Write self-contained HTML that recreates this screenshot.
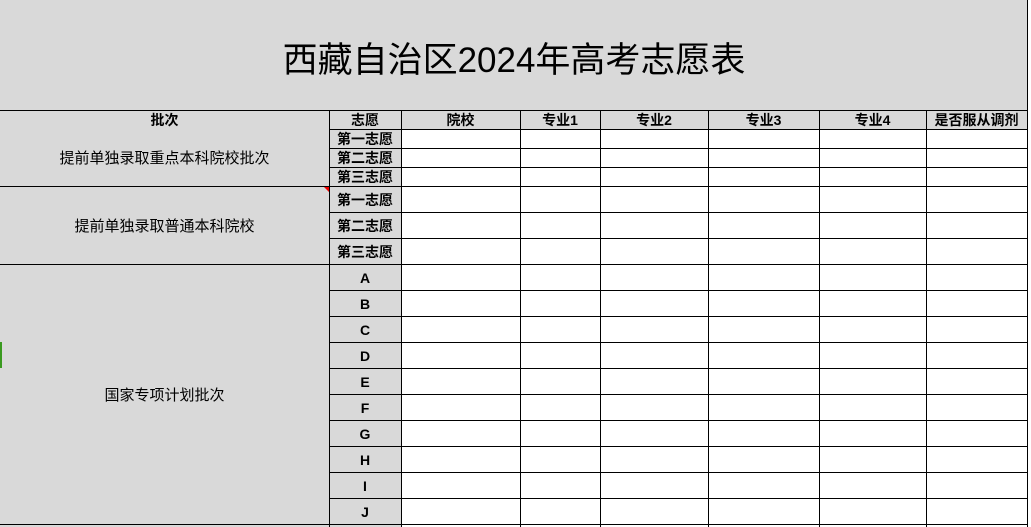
<!DOCTYPE html>
<html><head><meta charset="utf-8"><style>
*{margin:0;padding:0;box-sizing:border-box}
body{width:1031px;height:527px;overflow:hidden;background:#fff;position:relative;font-family:"Liberation Sans","Noto Sans CJK SC",sans-serif;color:#000}
.a{position:absolute}
.g{background:#d9d9d9}
.w{background:#fff}
.h{position:absolute;height:1px;background:#000}
.v{position:absolute;width:1px;background:#000}
.t{position:absolute;display:flex;align-items:center;justify-content:center;white-space:nowrap}
.b{font-weight:bold;font-size:14px}
.c{font-weight:bold;font-size:14px}
.n{font-size:15px}
</style></head><body>
<div class="a g" style="left:0;top:0;width:1028px;height:527px"></div>
<div class="a w" style="left:401px;top:129px;width:626px;height:398px"></div>
<div class="t" style="left:0;top:2px;width:1028px;height:110px;font-size:35px">西藏自治区2024年高考志愿表</div>

<div class="h" style="left:0;top:110px;width:1028px"></div>
<div class="h" style="left:329px;top:129px;width:699px"></div>
<div class="h" style="left:329px;top:148px;width:699px"></div>
<div class="h" style="left:329px;top:167px;width:699px"></div>
<div class="h" style="left:0;top:186px;width:1028px"></div>
<div class="h" style="left:329px;top:212px;width:699px"></div>
<div class="h" style="left:329px;top:238px;width:699px"></div>
<div class="h" style="left:0;top:264px;width:1028px"></div>
<div class="h" style="left:329px;top:290px;width:699px"></div>
<div class="h" style="left:329px;top:316px;width:699px"></div>
<div class="h" style="left:329px;top:342px;width:699px"></div>
<div class="h" style="left:329px;top:368px;width:699px"></div>
<div class="h" style="left:329px;top:394px;width:699px"></div>
<div class="h" style="left:329px;top:420px;width:699px"></div>
<div class="h" style="left:329px;top:446px;width:699px"></div>
<div class="h" style="left:329px;top:472px;width:699px"></div>
<div class="h" style="left:329px;top:498px;width:699px"></div>
<div class="h" style="left:0;top:524px;width:1028px"></div>
<div class="v" style="left:329px;top:110px;height:417px"></div>
<div class="v" style="left:401px;top:110px;height:417px"></div>
<div class="v" style="left:520px;top:110px;height:417px"></div>
<div class="v" style="left:600px;top:110px;height:417px"></div>
<div class="v" style="left:708px;top:110px;height:417px"></div>
<div class="v" style="left:819px;top:110px;height:417px"></div>
<div class="v" style="left:926px;top:110px;height:417px"></div>
<div class="v" style="left:1027px;top:0;height:527px"></div>
<div class="a" style="left:0;top:342px;width:2px;height:26px;background:#3a9a20"></div>
<div class="a" style="left:324px;top:187px;width:0;height:0;border-top:5px solid #e00;border-left:5px solid transparent"></div>

<div class="t b" style="left:0;top:110px;width:329px;height:20px">批次</div>
<div class="t b" style="left:329px;top:110px;width:72px;height:20px">志愿</div>
<div class="t b" style="left:401px;top:110px;width:119px;height:20px">院校</div>
<div class="t b" style="left:520px;top:110px;width:80px;height:20px">专业1</div>
<div class="t b" style="left:600px;top:110px;width:108px;height:20px">专业2</div>
<div class="t b" style="left:708px;top:110px;width:111px;height:20px">专业3</div>
<div class="t b" style="left:819px;top:110px;width:107px;height:20px">专业4</div>
<div class="t b" style="left:926px;top:110px;width:101px;height:20px">是否服从调剂</div>

<div class="t n" style="left:0;top:129px;width:329px;height:57px">提前单独录取重点本科院校批次</div>
<div class="t n" style="left:0;top:186px;width:329px;height:78px">提前单独录取普通本科院校</div>
<div class="t n" style="left:0;top:264px;width:329px;height:260px">国家专项计划批次</div>

<div class="t c" style="left:329px;top:129px;width:72px;height:20px">第一志愿</div>
<div class="t c" style="left:329px;top:148px;width:72px;height:20px">第二志愿</div>
<div class="t c" style="left:329px;top:167px;width:72px;height:20px">第三志愿</div>
<div class="t c" style="left:329px;top:186px;width:72px;height:27px">第一志愿</div>
<div class="t c" style="left:329px;top:212px;width:72px;height:27px">第二志愿</div>
<div class="t c" style="left:329px;top:238px;width:72px;height:27px">第三志愿</div>
<div class="t c" style="left:329px;top:264px;width:72px;height:27px">A</div>
<div class="t c" style="left:329px;top:290px;width:72px;height:27px">B</div>
<div class="t c" style="left:329px;top:316px;width:72px;height:27px">C</div>
<div class="t c" style="left:329px;top:342px;width:72px;height:27px">D</div>
<div class="t c" style="left:329px;top:368px;width:72px;height:27px">E</div>
<div class="t c" style="left:329px;top:394px;width:72px;height:27px">F</div>
<div class="t c" style="left:329px;top:420px;width:72px;height:27px">G</div>
<div class="t c" style="left:329px;top:446px;width:72px;height:27px">H</div>
<div class="t c" style="left:329px;top:472px;width:72px;height:27px">I</div>
<div class="t c" style="left:329px;top:498px;width:72px;height:27px">J</div>
</body></html>
